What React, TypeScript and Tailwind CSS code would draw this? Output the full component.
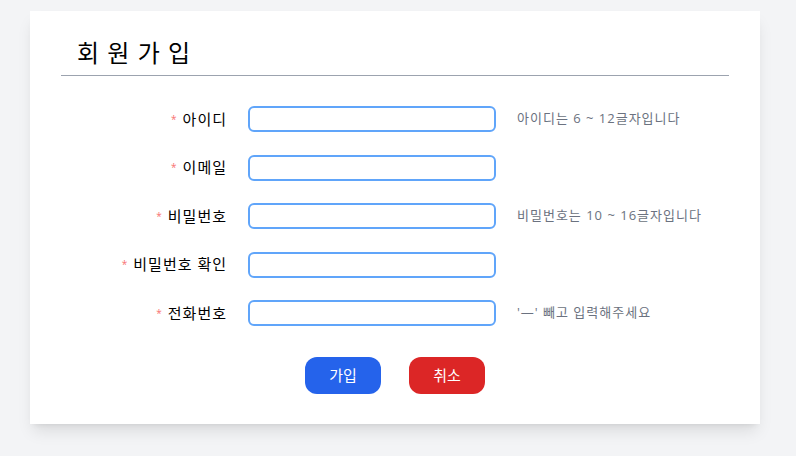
const FONT = '"Open Sans", "Noto Sans CJK KR", sans-serif';

interface Field {
  label: string;
  hint?: string;
}

const FIELDS: Field[] = [
  { label: '아이디', hint: '아이디는 6 ~ 12글자입니다' },
  { label: '이메일' },
  { label: '비밀번호', hint: '비밀번호는 10 ~ 16글자입니다' },
  { label: '비밀번호 확인' },
  { label: '전화번호', hint: "'—' 빼고 입력해주세요" },
];

function FormRow({ field }: { field: Field }) {
  return (
    <div className="flex items-center h-[26px]">
      <label className="w-[166px] flex items-center justify-end gap-[5px] text-[15px] tracking-[1px] text-black">
        <span className="text-[10px] text-[#f87171]">*</span>
        <span>{field.label}</span>
      </label>
      <input
        type="text"
        className="ml-[21px] w-[248px] h-[26px] rounded-md border-2 border-[#60a5fa] bg-white outline-none"
      />
      {field.hint && (
        <span className="ml-[21px] text-[13px] tracking-[1px] text-[#6b7280]">{field.hint}</span>
      )}
    </div>
  );
}

export default function App() {
  return (
    <div className="min-h-[456px] bg-[#f3f4f6] pt-[11px]" style={{ fontFamily: FONT }}>
      <div className="ml-[30px] w-[730px] bg-white shadow-lg px-[31px] pt-[24px] pb-[30px]">
        <h1 className="pl-[16px] pb-[4px] text-[24px] leading-[36px] tracking-[1px] text-black border-b border-[#9ca3af]">
          회 원 가 입
        </h1>

        <div className="mt-[30px] flex flex-col gap-[22.5px]">
          {FIELDS.map((f) => (
            <FormRow key={f.label} field={f} />
          ))}
        </div>

        {/* Buttons */}
        <div className="mt-[31px] flex justify-center gap-[28px]">
          <button className="w-[76px] h-[37px] rounded-xl bg-[#2563eb] text-white text-[15px]">
            가입
          </button>
          <button className="w-[76px] h-[37px] rounded-xl bg-[#dc2626] text-white text-[15px]">
            취소
          </button>
        </div>
      </div>
    </div>
  );
}
